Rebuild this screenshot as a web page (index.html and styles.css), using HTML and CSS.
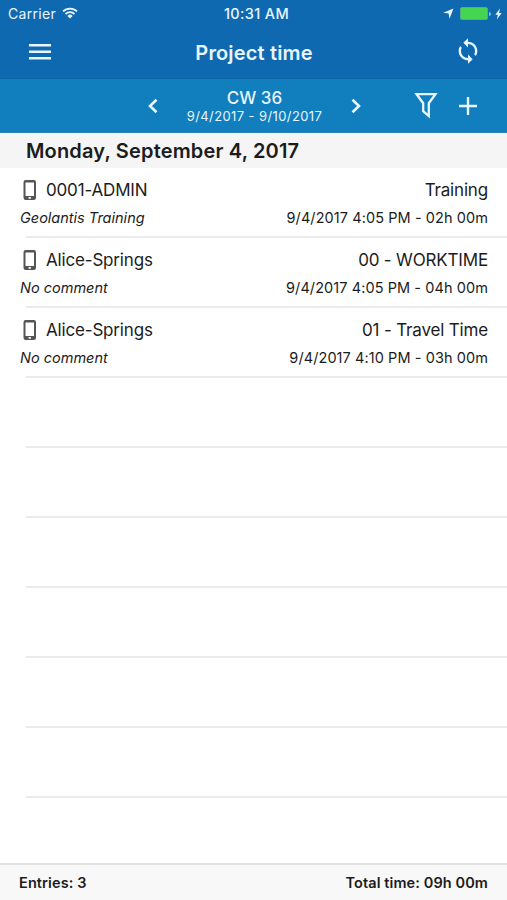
FILE: index.html
```html
<!doctype html>
<html lang="en">
<head>
<meta charset="utf-8">
<title>Project time</title>
<link rel="stylesheet" href="styles.css">
</head>

<body>
<div class="app">
	<div class="top">
		<div class="status">
			<div class="status-left">
				<span class="carrier">Carrier</span>
				<svg width="16" height="12" viewBox="0 0 16 12" fill="none" stroke="#e8f6ff" stroke-width="1.8">
					<path d="M1 4.4a10 10 0 0 1 14 0M3.5 7a6.4 6.4 0 0 1 9 0"/>
					<path d="M8 11.5L5.4 8.9a3.7 3.7 0 0 1 5.2 0z" fill="#e8f6ff" stroke="none"/>
				</svg>
			</div>
			<span class="clock">10:31 AM</span>
			<div class="status-right">
				<svg width="11" height="11" viewBox="0 0 11 11" fill="#e8f6ff"><path d="M10.5.5L6.5 10.8 5.6 5.5.2 4.7z"/></svg>
				<span class="battery"></span>
				<span class="battery-tip"></span>
				<svg class="bolt" width="7" height="12" viewBox="0 0 7 12" fill="#e8f6ff"><path d="M5 .5L.3 6.7h2.6L1.800 11.500 6.700 5H4z"/></svg>
			</div>
		</div>
		<div class="nav">
			<svg class="menu" width="22" height="16" viewBox="0 0 22 16" fill="#e8f6ff"><path d="M0 0h22v2.6H0zM0 6.5h22v2.6H0zM0 13h22v2.6H0z"/></svg>
			<h1>Project time</h1>
			<svg class="sync" width="28" height="28" viewBox="0 0 24 24" fill="#e8f6ff"><path d="M12 4V1L8 5l4 4V6c3.31 0 6 2.69 6 6 0 1.01-.25 1.97-.7 2.8l1.46 1.46C19.54 15.03 20 13.57 20 12c0-4.42-3.58-8-8-8zm0 14c-3.31 0-6-2.69-6-6 0-1.01.25-1.97.7-2.8L5.24 7.74C4.46 8.97 4 10.43 4 12c0 4.42 3.58 8 8 8v3l4-4-4-4v3z"/></svg>
		</div>
	</div>

	<div class="week">
		<svg class="prev" width="10" height="16" viewBox="0 0 10 16" fill="none" stroke="#e8f6ff" stroke-width="2.6"><path d="M8.5 1.7L2 8l6.5 6.3"/></svg>
		<div class="week-text">
			<div class="cw">CW 36</div>
			<div class="range">9/4/2017 - 9/10/2017</div>
		</div>
		<svg class="next" width="10" height="16" viewBox="0 0 10 16" fill="none" stroke="#e8f6ff" stroke-width="2.6"><path d="M1.5 1.7L8 8l-6.5 6.3"/></svg>
		<svg class="filter" width="24" height="27" viewBox="0 0 24 27" fill="none" stroke="#e8f6ff" stroke-width="2.3"><path d="M2.5 2.2h19L14.8 11.2V24L9.2 19.2V11.2z"/></svg>
		<svg class="add" width="18" height="18" viewBox="0 0 18 18" fill="#e8f6ff"><path d="M7.8 0h2.4v7.8H18v2.4h-7.8V18H7.8v-7.8H0V7.8h7.8z"/></svg>
	</div>

	<h2 class="day">Monday, September 4, 2017</h2>

	<ul class="list">
		<li>
			<div class="line">
				<svg class="phone" width="14" height="21" viewBox="0 0 14 21"><path fill="#555" fill-rule="evenodd" d="M2.7 0h8.1a2.2 2.2 0 0 1 2.2 2.2v15.600a2.200 2.200 0 0 1-2.200 2.200H2.700A2.200 2.200 0 0 1 .5 17.800V2.200A2.200 2.200 0 0 1 2.700 0zM2.500 2.500v13.500H11V2.500zM5.600 17.100v1.600h2.300v-1.600z"/></svg>
				<span class="name">0001-ADMIN</span>
				<span class="type">Training</span>
			</div>
			<div class="line small">
				<em>Geolantis Training</em>
				<span class="time">9/4/2017 4:05 PM - 02h 00m</span>
			</div>
		</li>
		<li>
			<div class="line">
				<svg class="phone" width="14" height="21" viewBox="0 0 14 21"><path fill="#555" fill-rule="evenodd" d="M2.7 0h8.1a2.2 2.2 0 0 1 2.2 2.2v15.600a2.200 2.200 0 0 1-2.200 2.200H2.700A2.200 2.200 0 0 1 .5 17.800V2.200A2.200 2.200 0 0 1 2.700 0zM2.500 2.500v13.500H11V2.500zM5.600 17.100v1.600h2.300v-1.600z"/></svg>
				<span class="name">Alice-Springs</span>
				<span class="type">00 - WORKTIME</span>
			</div>
			<div class="line small">
				<em>No comment</em>
				<span class="time">9/4/2017 4:05 PM - 04h 00m</span>
			</div>
		</li>
		<li>
			<div class="line">
				<svg class="phone" width="14" height="21" viewBox="0 0 14 21"><path fill="#555" fill-rule="evenodd" d="M2.7 0h8.1a2.2 2.2 0 0 1 2.2 2.2v15.600a2.200 2.200 0 0 1-2.200 2.200H2.700A2.200 2.200 0 0 1 .5 17.800V2.200A2.200 2.200 0 0 1 2.700 0zM2.500 2.500v13.500H11V2.500zM5.600 17.100v1.600h2.300v-1.600z"/></svg>
				<span class="name">Alice-Springs</span>
				<span class="type">01 - Travel Time</span>
			</div>
			<div class="line small">
				<em>No comment</em>
				<span class="time">9/4/2017 4:10 PM - 03h 00m</span>
			</div>
		</li>
		<li></li>
		<li></li>
		<li></li>
		<li></li>
		<li></li>
		<li></li>
	</ul>

	<div class="footer">
		<span>Entries: 3</span>
		<span>Total time: 09h 00m</span>
	</div>
</div>
</body>
</html>
```

FILE: styles.css
```css
*{ margin:0; padding:0; box-sizing:border-box; list-style:none;}
body{ font-family:Inter, "Liberation Sans", sans-serif; color:#1c1c1c; background:#fff;}
svg{ display:block; flex:none;}
.app{ height:900px; display:flex; flex-direction:column; overflow:hidden;}

.top{ height:79px; background:#0f69b0; color:#e8f6ff; flex:none; border-bottom:1px solid #0d65a6;}
.status{ height:27px; padding:0 5px 0 8px; display:grid; grid-template-columns:1fr auto 1fr; align-items:center; font-size:14px; line-height:27px;}
.status-left{ display:flex; align-items:center; gap:6px;}
.status-left svg{ margin-top:-2px;}
.carrier{ letter-spacing:.3px;}
.clock{ padding-left:3px; font-size:14.5px; font-weight:500; letter-spacing:.35px;}
.status-right{ display:flex; align-items:center; justify-content:flex-end;}
.battery{ width:28px; height:13px; margin-left:6px; background:#45d550; border:1px solid #4fae86; border-radius:2px;}
.battery-tip{ width:2px; height:4px; margin-left:1px; background:#7fc3b4; border-radius:0 2px 2px 0;}
.bolt{ margin-left:4px;}

.nav{ height:51px; padding:0 25px 0 29px; display:flex; align-items:center; justify-content:space-between;}
.nav .menu{ margin-top:-2px;}
.nav .sync{ margin-top:-3px;}
.nav h1{ padding-left:3px; font-size:20px; font-weight:600; letter-spacing:.15px;}

.week{ height:54px; background:#117ebe; color:#e8f6ff; display:flex; align-items:center; padding-left:148px; flex:none; border-bottom:1px solid #2a83b8;}
.week-text{ width:193px; padding-top:2px; text-align:center;}
.cw{ font-size:17px; line-height:19px; font-weight:500;}
.range{ font-size:13px; line-height:17px; letter-spacing:.4px;}
.filter{ margin-left:53px;}
.add{ margin-left:21px;}

.day{ height:35px; line-height:37px; padding-left:26px; background:#f5f5f5; font-size:20px; font-weight:600; letter-spacing:.17px; flex:none;}

.list li{ height:70px; padding:10px 19px 0 20px; background:linear-gradient(#ebebeb,#ebebeb) 26px 100% / 100% 2px no-repeat;}
.line{ height:24px; display:flex; align-items:center; font-size:17px; letter-spacing:-.17px;}
.phone{ margin:0 9px 0 3px;}
.type,.time{ margin-left:auto;}
.small{ height:31px; font-size:14.5px; letter-spacing:0;}
.time{ letter-spacing:.08px;}

.footer{ height:37px; margin-top:auto; padding:0 19px 1px; background:#f8f8f8; border-top:2px solid #e2e2e2; display:flex; justify-content:space-between; align-items:center; font-size:14.5px; font-weight:600; letter-spacing:.1px; flex:none;}
```
